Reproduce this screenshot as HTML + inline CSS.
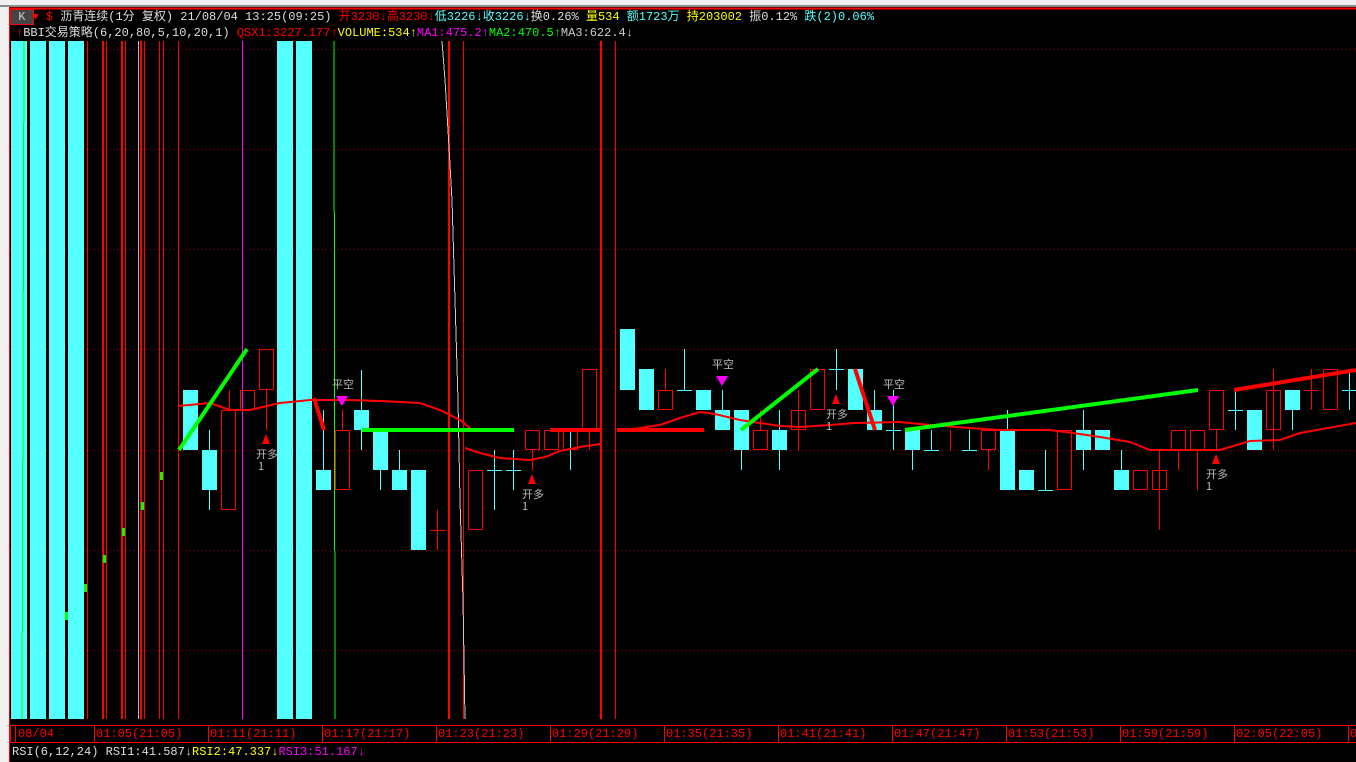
<!DOCTYPE html>
<html><head><meta charset="utf-8"><style>
html,body{margin:0;padding:0;background:#000;width:1356px;height:762px;overflow:hidden}
.t{position:absolute;font-family:"Liberation Mono","Noto Sans CJK SC",monospace;font-size:12px;line-height:14px;white-space:pre;letter-spacing:0}
.a{position:absolute;top:0}
</style></head><body>
<div style="position:absolute;left:0;top:0;width:1356px;height:5px;background:#f0f0f0"></div>
<div style="position:absolute;left:0;top:5px;width:1356px;height:2px;background:#8c8c8c"></div>
<div style="position:absolute;left:0;top:7px;width:9px;height:755px;background:#f0f0f0"></div>
<svg width="1356" height="762" style="position:absolute;left:0;top:0" shape-rendering="crispEdges">
<rect x="9" y="7" width="1347" height="755" fill="#000"/>
<line x1="9" y1="8.5" x2="1356" y2="8.5" stroke="#f00" stroke-width="2"/>
<line x1="9.5" y1="8" x2="9.5" y2="762" stroke="#f00"/>
<g stroke="#a00" stroke-dasharray="1,3">
<line x1="10" y1="49.5" x2="1356" y2="49.5"/><line x1="10" y1="149.5" x2="1356" y2="149.5"/>
<line x1="10" y1="249.5" x2="1356" y2="249.5"/><line x1="10" y1="349.5" x2="1356" y2="349.5"/>
<line x1="10" y1="450.5" x2="1356" y2="450.5"/><line x1="10" y1="550.5" x2="1356" y2="550.5"/>
<line x1="10" y1="650.5" x2="1356" y2="650.5"/>
</g>
<g fill="#54ffff">
<rect x="11" y="41" width="16" height="678"/><rect x="30" y="41" width="16" height="678"/>
<rect x="49" y="41" width="16" height="678"/><rect x="68" y="41" width="16" height="678"/>
<rect x="277" y="41" width="16" height="678"/><rect x="296" y="41" width="16" height="678"/>
</g>
<g fill="#f00">
<rect x="87" y="41" width="1" height="678"/><rect x="102" y="41" width="2" height="678"/>
<rect x="106" y="41" width="1" height="678"/><rect x="121" y="41" width="2" height="678"/>
<rect x="125" y="41" width="1" height="678"/><rect x="140" y="41" width="2" height="678"/>
<rect x="144" y="41" width="1" height="678"/><rect x="159" y="41" width="1" height="678"/>
<rect x="163" y="41" width="1" height="678"/><rect x="178" y="41" width="1" height="678"/>
<rect x="448" y="41" width="2" height="678"/><rect x="463" y="41" width="1" height="678"/>
<rect x="600" y="41" width="2" height="678"/><rect x="615" y="41" width="1" height="678"/>
</g>
<line x1="138.5" y1="41" x2="138.5" y2="719" stroke="#bbb"/>
<line x1="242.5" y1="41" x2="242.5" y2="719" stroke="#f0f"/>
<line x1="334" y1="41" x2="335" y2="719" stroke="#0f0"/>
<line x1="24" y1="41" x2="22" y2="719" stroke="#0f0"/>
<polyline points="442,41 445,80 448,130 452,200 455,300 458,400 460,500 463,600 465,719" fill="none" stroke="#ccc"/>
<g fill="#0f0"><rect x="122" y="528" width="3" height="8"/><rect x="141" y="502" width="3" height="8"/><rect x="103" y="555" width="3" height="8"/><rect x="84" y="584" width="3" height="8"/><rect x="65" y="612" width="3" height="8"/><rect x="160" y="472" width="3" height="8"/></g>
<g fill="#54ffff">
<rect x="183" y="390" width="15" height="60"/>
<rect x="202" y="450" width="15" height="40"/>
<rect x="316" y="470" width="15" height="20"/>
<rect x="354" y="410" width="15" height="20"/>
<rect x="373" y="430" width="15" height="40"/>
<rect x="392" y="470" width="15" height="20"/>
<rect x="411" y="470" width="15" height="80"/>
<rect x="620" y="329" width="15" height="61"/>
<rect x="639" y="369" width="15" height="41"/>
<rect x="696" y="390" width="15" height="20"/>
<rect x="715" y="410" width="15" height="20"/>
<rect x="734" y="410" width="15" height="40"/>
<rect x="772" y="430" width="15" height="20"/>
<rect x="848" y="369" width="15" height="41"/>
<rect x="867" y="410" width="15" height="20"/>
<rect x="905" y="430" width="15" height="20"/>
<rect x="1000" y="430" width="15" height="60"/>
<rect x="1019" y="470" width="15" height="20"/>
<rect x="1076" y="430" width="15" height="20"/>
<rect x="1095" y="430" width="15" height="20"/>
<rect x="1114" y="470" width="15" height="20"/>
<rect x="1247" y="410" width="15" height="40"/>
<rect x="1285" y="390" width="15" height="20"/>
</g>
<g stroke="#54ffff">
<line x1="209.5" y1="430" x2="209.5" y2="510"/>
<line x1="323.5" y1="410" x2="323.5" y2="470"/>
<line x1="361.5" y1="370" x2="361.5" y2="450"/>
<line x1="380.5" y1="470" x2="380.5" y2="490"/>
<line x1="399.5" y1="450" x2="399.5" y2="470"/>
<line x1="494.5" y1="450" x2="494.5" y2="510"/><line x1="487" y1="470.5" x2="502" y2="470.5"/>
<line x1="513.5" y1="450" x2="513.5" y2="490"/><line x1="506" y1="470.5" x2="521" y2="470.5"/>
<line x1="570.5" y1="430" x2="570.5" y2="470"/>
<line x1="684.5" y1="349" x2="684.5" y2="390"/><line x1="677" y1="390.5" x2="692" y2="390.5"/>
<line x1="722.5" y1="390" x2="722.5" y2="410"/>
<line x1="741.5" y1="450" x2="741.5" y2="470"/>
<line x1="779.5" y1="410" x2="779.5" y2="470"/>
<line x1="836.5" y1="349" x2="836.5" y2="390"/><line x1="829" y1="369.5" x2="844" y2="369.5"/>
<line x1="874.5" y1="390" x2="874.5" y2="430"/>
<line x1="893.5" y1="390" x2="893.5" y2="450"/><line x1="886" y1="430.5" x2="901" y2="430.5"/>
<line x1="912.5" y1="450" x2="912.5" y2="470"/>
<line x1="931.5" y1="430" x2="931.5" y2="450"/><line x1="924" y1="450.5" x2="939" y2="450.5"/>
<line x1="969.5" y1="430" x2="969.5" y2="450"/><line x1="962" y1="450.5" x2="977" y2="450.5"/>
<line x1="1007.5" y1="410" x2="1007.5" y2="430"/>
<line x1="1045.5" y1="450" x2="1045.5" y2="490"/><line x1="1038" y1="490.5" x2="1053" y2="490.5"/>
<line x1="1083.5" y1="410" x2="1083.5" y2="470"/>
<line x1="1121.5" y1="450" x2="1121.5" y2="470"/>
<line x1="1235.5" y1="390" x2="1235.5" y2="430"/><line x1="1228" y1="410.5" x2="1243" y2="410.5"/>
<line x1="1292.5" y1="410" x2="1292.5" y2="430"/>
<line x1="1349.5" y1="369" x2="1349.5" y2="410"/><line x1="1342" y1="390.5" x2="1356" y2="390.5"/>
</g>
<g fill="none" stroke="#f00">
<rect x="221.5" y="410.5" width="14" height="99"/><line x1="229.5" y1="390" x2="229.5" y2="410"/>
<rect x="240.5" y="390.5" width="14" height="19"/>
<rect x="259.5" y="349.5" width="14" height="40"/><line x1="266.5" y1="390" x2="266.5" y2="430"/>
<rect x="335.5" y="430.5" width="14" height="59"/><line x1="342.5" y1="410" x2="342.5" y2="430"/>
<line x1="430" y1="530.5" x2="446" y2="530.5"/><line x1="437.5" y1="510" x2="437.5" y2="550"/>
<rect x="468.5" y="470.5" width="14" height="59"/>
<rect x="525.5" y="430.5" width="14" height="19"/><line x1="532.5" y1="450" x2="532.5" y2="470"/>
<rect x="544.5" y="430.5" width="14" height="19"/>
<rect x="563.5" y="430.5" width="14" height="19"/>
<rect x="582.5" y="369.5" width="14" height="60"/><line x1="589.5" y1="430" x2="589.5" y2="450"/>
<rect x="658.5" y="390.5" width="14" height="19"/><line x1="665.5" y1="369" x2="665.5" y2="390"/>
<rect x="753.5" y="430.5" width="14" height="19"/><line x1="760.5" y1="410" x2="760.5" y2="430"/>
<rect x="791.5" y="410.5" width="14" height="19"/><line x1="798.5" y1="390" x2="798.5" y2="450"/>
<rect x="810.5" y="369.5" width="14" height="40"/>
<line x1="950.5" y1="430" x2="950.5" y2="450"/>
<rect x="981.5" y="430.5" width="14" height="19"/><line x1="988.5" y1="450" x2="988.5" y2="470"/>
<rect x="1057.5" y="430.5" width="14" height="59"/>
<rect x="1133.5" y="470.5" width="14" height="19"/>
<rect x="1152.5" y="470.5" width="14" height="19"/><line x1="1159.5" y1="450" x2="1159.5" y2="530"/>
<rect x="1171.5" y="430.5" width="14" height="19"/><line x1="1178.5" y1="450" x2="1178.5" y2="470"/>
<rect x="1190.5" y="430.5" width="14" height="19"/><line x1="1197.5" y1="450" x2="1197.5" y2="490"/>
<rect x="1209.5" y="390.5" width="14" height="39"/><line x1="1216.5" y1="430" x2="1216.5" y2="450"/>
<rect x="1266.5" y="390.5" width="14" height="39"/><line x1="1273.5" y1="369" x2="1273.5" y2="450"/>
<line x1="1304" y1="390.5" x2="1319" y2="390.5"/><line x1="1311.5" y1="369" x2="1311.5" y2="410"/>
<rect x="1323.5" y="369.5" width="14" height="40"/>
</g>
<g shape-rendering="auto">
<polyline fill="none" stroke="#f00" stroke-width="2" points="178,406 210,403 230,410 250,410 280,403 310,400 350,400 380,401 420,403 440,410 460,420 470,428"/>
<polyline fill="none" stroke="#f00" stroke-width="2" points="465,448 480,453 500,458 530,460 545,457 560,451 580,447 600,444"/>
<polyline fill="none" stroke="#f00" stroke-width="2" points="617,431 640,428 660,425 680,418 700,412 715,414 740,420 760,423 780,426 800,427 830,425 855,423 900,422 930,425 970,428 1000,430 1050,430 1080,434 1100,437 1130,442 1150,450 1200,450 1220,450 1250,441 1280,440 1300,433 1356,423"/>
<g stroke="#0f0" stroke-width="4">
<line x1="179" y1="450" x2="247" y2="349"/>
<line x1="362" y1="430" x2="514" y2="430"/>
<line x1="741" y1="430" x2="818" y2="369"/>
<line x1="905" y1="430" x2="1198" y2="390"/>
</g>
<g stroke="#f00" stroke-width="4">
<line x1="314" y1="398" x2="324" y2="430"/>
<line x1="550" y1="430" x2="600" y2="430"/>
<line x1="617" y1="430" x2="704" y2="430"/>
<line x1="855" y1="369" x2="875" y2="430"/>
<line x1="1234" y1="390" x2="1356" y2="370"/>
</g>
<g fill="#f00"><path d="M266 434 L262 444 L270 444Z"/><path d="M532 474 L528 484 L536 484Z"/><path d="M836 394 L832 404 L840 404Z"/><path d="M1216 454 L1212 464 L1220 464Z"/></g>
<g fill="#f0f"><path d="M336 396 L348 396 L342 406Z"/><path d="M716 376 L728 376 L722 386Z"/><path d="M887 396 L899 396 L893 406Z"/></g>
</g>
<g font-family="Noto Sans CJK SC,sans-serif" font-size="11" fill="#bbb">
<text x="256" y="458">开多</text><text x="258" y="470">1</text>
<text x="522" y="498">开多</text><text x="522" y="510">1</text>
<text x="826" y="418">开多</text><text x="826" y="430">1</text>
<text x="1206" y="478">开多</text><text x="1206" y="490">1</text>
<text x="332" y="388">平空</text><text x="712" y="368">平空</text><text x="883" y="388">平空</text>
</g>
<rect x="10.5" y="725.5" width="1346" height="17" fill="#000" stroke="#f00"/>
<g stroke="#f00"><line x1="15.5" y1="725" x2="15.5" y2="743"/><line x1="94.5" y1="725" x2="94.5" y2="743"/><line x1="208.5" y1="725" x2="208.5" y2="743"/><line x1="322.5" y1="725" x2="322.5" y2="743"/><line x1="436.5" y1="725" x2="436.5" y2="743"/><line x1="550.5" y1="725" x2="550.5" y2="743"/><line x1="664.5" y1="725" x2="664.5" y2="743"/><line x1="778.5" y1="725" x2="778.5" y2="743"/><line x1="892.5" y1="725" x2="892.5" y2="743"/><line x1="1006.5" y1="725" x2="1006.5" y2="743"/><line x1="1120.5" y1="725" x2="1120.5" y2="743"/><line x1="1234.5" y1="725" x2="1234.5" y2="743"/><line x1="1348.5" y1="725" x2="1348.5" y2="743"/></g>
</svg>
<div class="t" style="left:11px;top:10px"><span style="color:#ccc;background:#444;outline:1px solid #f00">&nbsp;K&nbsp;</span><span style="color:#f00">▾</span> <span style="color:#f00">$</span> <span style="color:#ddd">沥青连续(1分 复权) 21/08/04 13:25(09:25)</span> <span style="color:#f00">开3230↓高3230↓</span><span style="color:#54ffff">低3226↓收3226↓</span><span style="color:#ddd">换0.26%</span> <span style="color:#ff0">量534</span> <span style="color:#54ffff">额1723万</span> <span style="color:#ff0">持203002</span> <span style="color:#ddd">振0.12%</span> <span style="color:#54ffff">跌(2)0.06%</span></div>
<div class="t" style="left:16px;top:26px"><span style="color:#f00">↑</span><span style="color:#ddd">BBI交易策略(6,20,80,5,10,20,1)</span> <span style="color:#f00">QSX1:3227.177↑</span><span style="color:#ff0">VOLUME:534↑</span><span style="color:#f0f">MA1:475.2↑</span><span style="color:#0f0">MA2:470.5↑</span><span style="color:#ccc">MA3:622.4↓</span></div>
<div class="t" style="top:727px;left:0;width:1356px;height:14px;color:#f00"><span class="a" style="left:18px">08/04</span><span class="a" style="left:96px">01:05(21:05)</span><span class="a" style="left:210px">01:11(21:11)</span><span class="a" style="left:324px">01:17(21:17)</span><span class="a" style="left:438px">01:23(21:23)</span><span class="a" style="left:552px">01:29(21:29)</span><span class="a" style="left:666px">01:35(21:35)</span><span class="a" style="left:780px">01:41(21:41)</span><span class="a" style="left:894px">01:47(21:47)</span><span class="a" style="left:1008px">01:53(21:53)</span><span class="a" style="left:1122px">01:59(21:59)</span><span class="a" style="left:1236px">02:05(22:05)</span><span class="a" style="left:1350px">0</span></div>
<div class="t" style="left:12px;top:745px"><span style="color:#ddd">RSI(6,12,24) RSI1:41.587↓</span><span style="color:#ff0">RSI2:47.337↓</span><span style="color:#f0f">RSI3:51.167↓</span></div>
</body></html>
